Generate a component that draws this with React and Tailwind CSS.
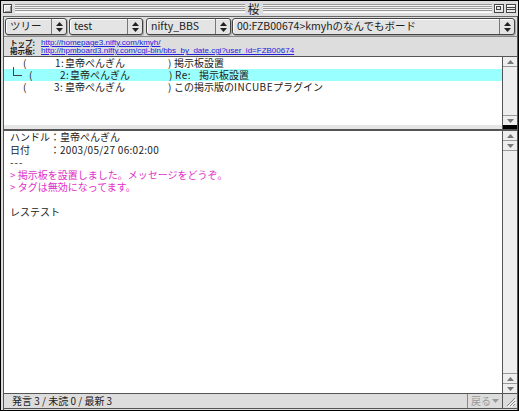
import React from "react";

function UpArrow() {
  return (
    <svg width="7" height="4" viewBox="0 0 7 4"><polygon points="0,4 3.5,0 7,4" fill="#777" /></svg>
  );
}
function DownArrow() {
  return (
    <svg width="7" height="4" viewBox="0 0 7 4"><polygon points="0,0 3.5,4 7,0" fill="#777" /></svg>
  );
}

function PopupArrows() {
  return (
    <svg width="7" height="10" viewBox="0 0 7 10">
      <polygon points="0,4 3.5,0 7,4" fill="#222" />
      <polygon points="0,6 3.5,10 7,6" fill="#222" />
    </svg>
  );
}

function Popup({ cls, label }) {
  return (
    <div className={"h-[17px] flex items-stretch rounded-[3px] border border-[#444] bg-[#e4e4e4] shadow-[inset_1px_1px_0_#fff,1px_1px_0_#aaa] " + cls}>
      <div className="flex-1 flex items-center pl-[4px] text-[10.5px] leading-none whitespace-nowrap overflow-hidden">{label}</div>
      <div className="w-[15px] border-l border-[#777] flex items-center justify-center">
        <PopupArrows />
      </div>
    </div>
  );
}

function Stripes() {
  return (
    <div className="flex-1 h-[9px] border-t border-[#999] border-b border-b-[#fff] bg-[image:repeating-linear-gradient(to_bottom,#f2f2f2_0px,#f2f2f2_1px,#9a9a9a_1px,#9a9a9a_2px)]" />
  );
}

export default function App() {
  return (
    <div className="w-[519px] h-[411px] bg-[#dddddd] border border-black flex flex-col overflow-hidden font-['Noto_Sans_CJK_JP','Noto_Sans',sans-serif] text-[#222]">
      {/* Title bar */}
      <div className="h-[15px] shrink-0 flex items-center pl-[2px] pr-[2px]">
        <div className="w-[9px] h-[9px] border border-[#444] bg-[#e8e8e8] shadow-[inset_1px_1px_0_#fff,inset_-1px_-1px_0_#999]" />
        <div className="w-[3px]" />
        <Stripes />
        <div className="px-[3px] text-[12px] leading-none">桜</div>
        <Stripes />
        <div className="w-[2px]" />
        <div className="w-[10px] h-[9px] border border-[#444] bg-[#e8e8e8] relative shadow-[inset_1px_1px_0_#fff]">
          <div className="absolute left-[1px] top-[1px] w-[5px] h-[4px] border border-[#444]" />
        </div>
        <div className="w-[2px]" />
        <div className="w-[10px] h-[9px] border border-[#444] bg-[#e8e8e8] flex flex-col justify-center shadow-[inset_1px_1px_0_#fff]">
          <div className="h-[1px] bg-[#444]" />
          <div className="h-[1px]" />
          <div className="h-[1px] bg-[#444]" />
        </div>
      </div>

      {/* Content column */}
      <div className="ml-[2px] h-[394px] border-l border-r border-[#555] flex flex-col">
        {/* toolbar */}
        <div className="h-[21px] shrink-0 border-t border-b border-t-[#666] border-b-[#888] flex items-start pt-[1px]">
          <Popup cls="ml-[1px] w-[62px]" label="ツリー" />
          <Popup cls="ml-[2px] w-[74px]" label="test" />
          <Popup cls="ml-[3px] w-[85px]" label="nifty_BBS" />
          <Popup cls="ml-[1px] w-[283px]" label="00:FZB00674>kmyhのなんでもボード" />
        </div>

        {/* links */}
        <div className="h-[19px] shrink-0 pt-[2px] pl-[6px]">
          <div className="flex h-[8px] items-center overflow-visible">
            <span className="w-[31px] font-bold text-[7.5px] leading-[8px]">トップ:</span>
            <span className="font-['Liberation_Sans',sans-serif] text-[8px] leading-[8px] text-[#2222dd] underline">http://homepage3.nifty.com/kmyh/</span>
          </div>
          <div className="flex h-[8px] items-center overflow-visible">
            <span className="w-[31px] font-bold text-[7.5px] leading-[8px]">掲示板:</span>
            <span className="font-['Liberation_Sans',sans-serif] text-[8px] leading-[8px] text-[#2222dd] underline">http://hpmboard3.nifty.com/cgi-bin/bbs_by_date.cgi?user_id=FZB00674</span>
          </div>
        </div>

        {/* tree pane */}
        <div className="h-[69px] shrink-0 border-t border-[#555] flex">
          <div className="flex-1 bg-white text-[10px] leading-[12px] relative">
            <div className="absolute left-[9px] top-[10px] w-[1px] h-[9px] bg-[#444]" />
            <div className="absolute left-[9px] top-[18px] w-[9px] h-[1px] bg-[#444]" />
            <div className="flex h-[12px] items-center whitespace-nowrap">
              <span className="ml-[19px] w-[32px]">(</span>
              <span className="w-[10px] tracking-[0.5px]">1:</span>
              <span className="w-[103px]">皇帝ぺんぎん</span>
              <span className="w-[6px]">)</span>
              <span>掲示板設置</span>
            </div>
            <div className="flex h-[12px] items-center whitespace-nowrap bg-[#99ffff]">
              <span className="ml-[25px] w-[31px]">(</span>
              <span className="w-[10px] tracking-[0.5px]">2:</span>
              <span className="w-[99px]">皇帝ぺんぎん</span>
              <span className="w-[6px]">)</span>
              <span className="w-[24px] tracking-[0.5px]">Re:</span>
              <span>掲示板設置</span>
            </div>
            <div className="flex h-[12px] items-center whitespace-nowrap">
              <span className="ml-[19px] w-[31px]">(</span>
              <span className="w-[11px] tracking-[0.5px]">3:</span>
              <span className="w-[103px]">皇帝ぺんぎん</span>
              <span className="w-[6px]">)</span>
              <span>この掲示版の<span className="tracking-[0.5px]">INCUBE</span>プラグイン</span>
            </div>
          </div>
          <div className="w-[15px] border-l border-[#555] bg-[#eeeeee] flex flex-col">
            <div className="h-[10px] border-b border-[#999] flex items-center justify-center"><UpArrow /></div>
            <div className="flex-1" />
            <div className="h-[10px] border-t border-[#999] flex items-center justify-center"><DownArrow /></div>
          </div>
        </div>
        {/* splitter */}
        <div className="h-[4px] shrink-0 flex">
          <div className="flex-1 bg-[#e6e6e6]" />
          <div className="w-[15px] border-l border-[#555] bg-black" />
        </div>
        <div className="h-[2px] shrink-0 bg-[#555]" />

        {/* message pane */}
        <div className="h-[262px] shrink-0 flex">
          <div className="flex-1 bg-white pl-[6px] text-[10px] leading-[12.5px] whitespace-nowrap">
            <div>ハンドル：皇帝ぺんぎん</div>
            <div>日付　　：<span className="tracking-[0.3px]">2003/05/27 06:02:00</span></div>
            <div className="tracking-[1px]">---</div>
            <div className="text-[#e030c8]">&gt; 掲示板を設置しました。メッセージをどうぞ。</div>
            <div className="text-[#e030c8]">&gt; タグは無効になってます。</div>
            <div className="h-[12.5px]" />
            <div>レステスト</div>
          </div>
          <div className="w-[15px] border-l border-[#555] bg-[#eeeeee] flex flex-col">
            <div className="h-[10px] border-b border-[#999] flex items-center justify-center"><UpArrow /></div>
            <div className="h-[10px] border-b border-[#999] flex items-center justify-center"><DownArrow /></div>
            <div className="flex-1" />
            <div className="h-[10px] border-t border-[#999] flex items-center justify-center"><UpArrow /></div>
            <div className="h-[10px] border-t border-[#999] flex items-center justify-center"><DownArrow /></div>
          </div>
        </div>

        {/* status bar */}
        <div className="h-[16px] shrink-0 border-t border-b border-[#555] flex items-stretch">
          <div className="flex-1 flex items-center pl-[8px] text-[10px] leading-none">発言 3 / 未読 0 / 最新 3</div>
          <div className="w-[35px] border-l border-[#888] flex items-center pl-[3px] text-[10px] leading-none text-[#999]">
            戻る
            <svg width="7" height="4" viewBox="0 0 7 4" className="ml-[1px]"><polygon points="0,0 3.5,4 7,0" fill="#999" /></svg>
          </div>
          <div className="w-[15px] border-l border-[#555] flex items-center justify-center">
            <svg width="12" height="12" viewBox="0 0 12 12">
              <line x1="11" y1="3" x2="3" y2="11" stroke="#888" />
              <line x1="11" y1="6" x2="6" y2="11" stroke="#888" />
              <line x1="11" y1="9" x2="9" y2="11" stroke="#888" />
              <line x1="12" y1="4" x2="4" y2="12" stroke="#fff" />
              <line x1="12" y1="7" x2="7" y2="12" stroke="#fff" />
            </svg>
          </div>
        </div>
      </div>
    </div>
  );
}
